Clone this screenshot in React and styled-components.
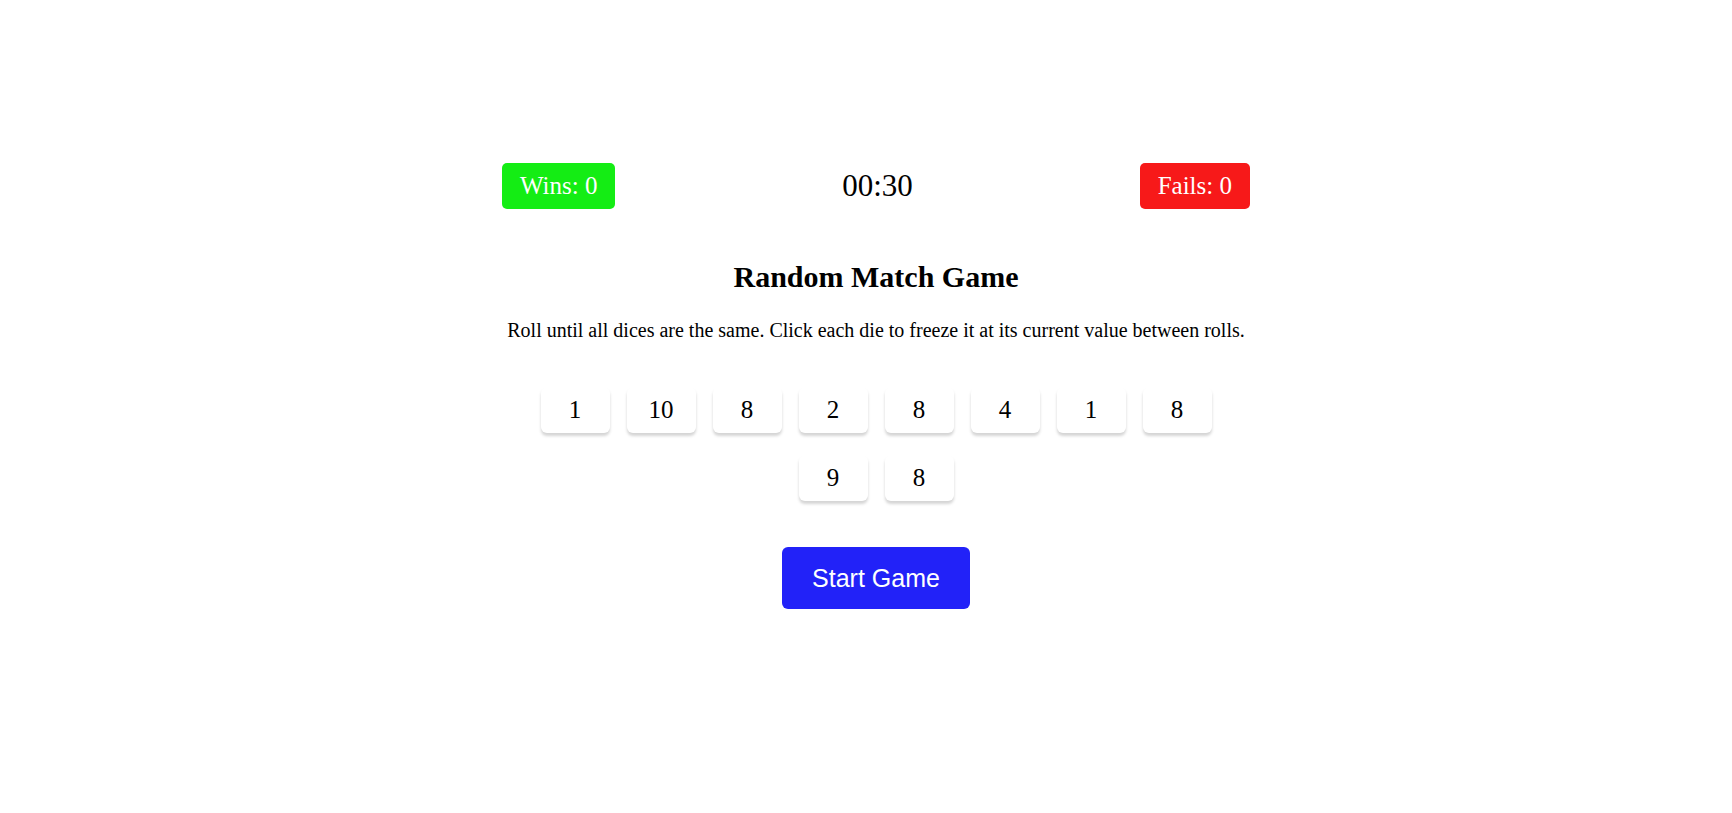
import React from "react";
import styled, { createGlobalStyle } from "styled-components";

const GlobalStyle = createGlobalStyle`
  * { box-sizing: border-box; }
  body { margin: 0; background: #fff; color: #000; font-family: "Liberation Serif", "Times New Roman", serif; }
`;
const Page = styled.main`
  min-height: 100vh;
  display: flex;
  flex-direction: column;
  align-items: center;
  padding: 163px 20px 20px;
  margin-left: 20px;
`;
const Game = styled.section`
  width: 100%;
  max-width: 748px;
  display: flex;
  flex-direction: column;
  align-items: center;
`;
const Scoreboard = styled.header`
  width: 100%;
  display: flex;
  align-items: center;
  justify-content: space-between;
`;
const Score = styled.div`
  padding: 8px 18px;
  border-radius: 5px;
  color: #fff;
  background: ${(p) => p.$color};
  font-size: 25px;
  line-height: 30px;
`;
const Timer = styled.div`
  font-size: 31px;
  line-height: 36px;
`;
const Title = styled.h1`
  margin: 50px 0 0;
  font-size: 30px;
  line-height: 36px;
`;
const Intro = styled.p`
  margin: 23px 0 0;
  font-size: 20px;
  line-height: 24px;
  text-align: center;
`;
const DiceList = styled.div`
  display: flex;
  flex-wrap: wrap;
  justify-content: center;
  gap: 22px 17px;
  margin-top: 45px;
`;
const Die = styled.button`
  width: 69px;
  height: 46px;
  padding: 0;
  border: 0;
  border-radius: 6px;
  background: #fff;
  color: #000;
  box-shadow: 0 3px 3px rgba(0, 0, 0, 0.17);
  font: 25px/30px "Liberation Serif", "Times New Roman", serif;
  cursor: pointer;
`;
const StartButton = styled.button`
  margin-top: 46px;
  padding: 16px 30px;
  border: 0;
  border-radius: 6px;
  background: #2222f8;
  color: #fff;
  font: 25px/30px "Liberation Sans", Arial, sans-serif;
  cursor: pointer;
`;

const dice = [1, 10, 8, 2, 8, 4, 1, 8, 9, 8];

export default function App() {
  return (
    <>
      <GlobalStyle />
      <Page>
        <Game>
          <Scoreboard>
            <Score $color="#14ed14">Wins: 0</Score>
            <Timer>00:30</Timer>
            <Score $color="#f71919">Fails: 0</Score>
          </Scoreboard>
          <Title>Random Match Game</Title>
          <Intro>
            Roll until all dices are the same. Click each die to freeze it at its current value between rolls.
          </Intro>
          <DiceList>
            {dice.map((value, i) => (
              <Die key={i} type="button">{value}</Die>
            ))}
          </DiceList>
          <StartButton type="button">Start Game</StartButton>
        </Game>
      </Page>
    </>
  );
}
